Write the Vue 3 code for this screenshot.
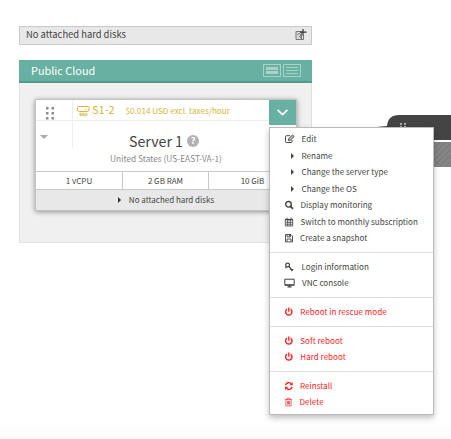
<script setup>
const groups = [
  [
    { icon: 'edit', label: 'Edit', x: 32.5 },
    { icon: 'caret', label: 'Rename', x: 32.5 },
    { icon: 'caret', label: 'Change the server type', x: 32.5 },
    { icon: 'caret', label: 'Change the OS', x: 32.5 },
    { icon: 'search', label: 'Display monitoring', x: 31.5 },
    { icon: 'calendar', label: 'Switch to monthly subscription', x: 31.5 },
    { icon: 'save', label: 'Create a snapshot', x: 31 },
  ],
  [
    { icon: 'key', label: 'Login information', x: 32.5 },
    { icon: 'screen', label: 'VNC console', x: 33 },
  ],
  [{ icon: 'power', label: 'Reboot in rescue mode', x: 31.3, danger: true }],
  [
    { icon: 'power', label: 'Soft reboot', x: 31.3, danger: true },
    { icon: 'power', label: 'Hard reboot', x: 31.3, danger: true },
  ],
  [
    { icon: 'refresh', label: 'Reinstall', x: 31, danger: true },
    { icon: 'trash', label: 'Delete', x: 30.5, danger: true },
  ],
]
const specs = ['1 vCPU', '2 GB RAM', '10 GiB']
</script>

<template>
  <div class="page">
    <svg class="neighbour" width="80" height="55" viewBox="0 0 80 55">
      <defs>
        <pattern id="hatch" width="6" height="6" patternUnits="userSpaceOnUse">
          <rect width="6" height="6" fill="#858585" />
          <path d="M-1 7L7 -1M-1 1L1 -1M5 7L7 5" stroke="#737373" stroke-width=".8" />
        </pattern>
      </defs>
      <path d="M0 12.500L16 11Q17 0 28 0H80V25H0Z" fill="#444" />
      <rect x="0" y="27" width="80" height="25" fill="url(#hatch)" />
      <path d="M29 8h2v2h-2zM33 8h2v2h-2zM29 11h2v2h-2zM33 11h2v2h-2z" fill="#aaa" />
    </svg>

    <div class="disks">
      <span>No attached hard disks</span>
      <svg width="12" height="12" viewBox="0 0 12 12" fill="none">
        <path d="M1 2.500h5.500v8H1z" fill="#d8d8d8" stroke="#777" />
        <path d="M8.500 6v4.500H3" stroke="#777" />
        <path d="M2.500 5.500q2-2 3 0t-1 2l3 2.500" stroke="#666" stroke-width=".9" />
        <path d="M8 0v6.500M5 3.200h6.500" stroke="#333" stroke-width="1.200" />
      </svg>
    </div>

    <section class="cloud">
      <header>
        <h1>Public Cloud</h1>
        <svg width="39" height="13" viewBox="0 0 39 13" fill="none" stroke="#a9d3c8">
          <path d="M.5 .5h17v12H.5zM20.500 .5h17v12h-17z" />
          <path d="M3 4.500h12M3 8.500h12" stroke-width="3" />
          <path d="M3 6.500h12" stroke="#67b0a2" />
          <path d="M23 3.500h12M23 6.500h12M23 9.500h12" />
        </svg>
      </header>
      <div class="body">
        <article class="card">
          <div class="top">
            <div class="grip">
              <svg width="9" height="13" viewBox="0 0 9 13" fill="#8d8d8d">
                <path d="M0 0h2.500v2.500H0zM5.500 0H8v2.500H5.500zM0 5h2.500v2.500H0zM5.500 5H8v2.500H5.500zM0 10h2.500v2.500H0zM5.500 10H8v2.500H5.500z" />
              </svg>
            </div>
            <svg class="ssd" width="13" height="11" viewBox="0 0 13 11" fill="none" stroke="#d5b63c">
              <path d="M1.500 .5h9.500q1 0 1 1v2.200q0 1.800-1.800 1.800H2.300Q.5 5.500 .5 3.700V1.500q0-1 1-1Z" />
              <path d="M8 3.500h2" stroke-width=".7" />
              <path d="M4.600 7.200H2.800v1.200h1.800v1.300H2.600M7.400 7.200H5.600v1.200h1.800v1.300H5.400M8.700 7.200v2.500h.8l.7-.7V7.800l-.7-.6Z" stroke-width=".8" />
            </svg>
            <span class="model">S1-2</span>
            <span class="price">$0.014 USD excl. taxes/hour</span>
            <button class="toggle">
              <svg width="11" height="7" viewBox="0 0 11 7" fill="none" stroke="#fff" stroke-width="1.700">
                <path d="M.6 .8L5.500 5.600L10.400 .8" />
              </svg>
            </button>
          </div>
          <div class="main">
            <div class="fold"><i></i></div>
            <div class="name">
              <span>Server 1</span>
              <b>?</b>
            </div>
            <p>United States (US-EAST-VA-1)</p>
          </div>
          <div class="specs">
            <div v-for="s in specs" :key="s">{{ s }}</div>
          </div>
          <div class="attached"><i></i><span>No attached hard disks</span></div>
        </article>
      </div>
    </section>

    <nav class="menu">
      <ul v-for="(g, n) in groups" :key="n">
        <li v-for="it in g" :key="it.label" :class="{ danger: it.danger }">
          <svg class="icon" width="12" height="10" viewBox="0 0 12 10" fill="none" stroke="currentColor">
            <template v-if="it.icon === 'edit'">
              <path d="M6 1.700H2.500Q1.500 1.700 1.500 2.700V7.500Q1.500 8.500 2.500 8.500H7Q8 8.500 8 7.500V6" />
              <path d="M4.400 6.500L4.800 4.600L8.500 .9L10.200 2.500L6.400 6.200Z" fill="#bbb" stroke-width=".9" />
            </template>
            <path v-else-if="it.icon === 'caret'" d="M7 2L10 5L7 8Z" fill="currentColor" stroke="none" />
            <template v-else-if="it.icon === 'search'">
              <circle cx="4.500" cy="4.300" r="2.800" stroke-width="1.400" />
              <path d="M6.500 6.300L9 8.900" stroke-width="1.700" />
            </template>
            <template v-else-if="it.icon === 'calendar'">
              <path d="M1.300 2.500h7.400v6.500H1.300zM3 .5v2M7 .5v2M3.700 3v6M6.300 3v6M1.300 5.300h7.400M1.300 7.200h7.400" stroke-width=".8" />
              <path d="M1 2.600h8" stroke-width="1.500" />
            </template>
            <template v-else-if="it.icon === 'save'">
              <path d="M1.500 1.500H7L8.500 3V8.900H1.500ZM3 8.800V6H7V8.800M3 1.500V3.900H6.500V1.500" stroke-width=".9" />
              <path d="M4.900 1.700h1v1.700h-1z" fill="currentColor" stroke="none" />
            </template>
            <template v-else-if="it.icon === 'key'">
              <circle cx="3.600" cy="3" r="1.900" stroke-width="1.200" />
              <path d="M1.500 6.300L2.500 4.500M4.800 4.300L8.500 8.500M6.300 7.700L7.500 6.500M7.500 9L9.200 7.300" stroke-width="1.200" />
            </template>
            <template v-else-if="it.icon === 'screen'">
              <path d="M.8 1.200h9.400v6H.8z" stroke-width="1" />
              <path d="M1 6.800h9M3.500 8.900h4M5.500 7v2" stroke-width="1.200" />
            </template>
            <path v-else-if="it.icon === 'power'" d="M3 2.200A3.200 3.200 0 1 0 6.600 2.200M4.800 .6V4.800" stroke-width="1.400" />
            <template v-else-if="it.icon === 'refresh'">
              <path d="M1.600 4.200A3.200 3.200 0 0 1 7.100 2.700M8.100 5.800A3.200 3.200 0 0 1 2.500 7.300" stroke-width="1.400" />
              <path d="M8.700 1V4.300H5.400ZM1 9V5.700H4.300Z" fill="currentColor" stroke="none" />
            </template>
            <path v-else d="M1 2.500h7M3 2.300l.4-1.300h2.200l.4 1.300M1.900 2.700V8.900H7.100V2.700M3.500 4v3.600M4.500 4v3.600M5.500 4v3.600" stroke-width=".7" />
          </svg>
          <span :style="{ marginLeft: it.x - 27 + 'px' }">{{ it.label }}</span>
        </li>
      </ul>
    </nav>
  </div>
</template>

<style>
body { background: #fff; }
</style>

<style scoped>
* { box-sizing: border-box; }
.page {
  position: relative;
  width: 451px;
  height: 439px;
  padding: 26px 0 0 19px;
  overflow: hidden;
  font-family: "Noto Sans CJK SC", "Open Sans", sans-serif;
  font-size: 8px;
  color: #444;
  background: linear-gradient(#fff 420px, #fbfbfb);
}
.neighbour { position: absolute; left: 371px; top: 115px; }
.disks {
  display: flex;
  align-items: center;
  justify-content: space-between;
  width: 293px;
  height: 19px;
  padding: 0 4px 2px 6px;
  border: 1px solid #c8c8c8;
  background: #e8e8e8;
  font-size: 9.400px;
  line-height: 14px;
}
.disks span { padding-bottom: 2px; }
.cloud { width: 293px; margin-top: 15px; }
.cloud header {
  display: flex;
  align-items: center;
  justify-content: space-between;
  height: 23px;
  padding: 0 10px 0 12px;
  border-bottom: 2px solid #529a8a;
  background: #67b0a2;
}
h1 { margin: 0; padding-bottom: 2px; font-size: 10.900px; font-weight: 400; line-height: 18px; color: #fff; }
.body {
  height: 160px;
  padding: 17px 15px 0 16px;
  border: 1px solid #e0e0e0;
  border-top: 0;
  background: #f0f0f0;
}
.card {
  width: 260px;
  height: 110px;
  background: #fff;
  box-shadow: 0 0 0 1px #c2c2c2, 0 1px 5px 1px rgba(0, 0, 0, .4);
}
.top {
  display: flex;
  align-items: center;
  height: 21px;
  border-bottom: 1px solid #eee;
}
.grip {
  display: flex;
  width: 37px;
  height: 20px;
  padding: 7px 0 0 10px;
  border-right: 1px solid #eee;
}
.ssd { margin-left: 4px; margin-top: 3px; }
.model { margin-left: 2px; margin-top: -2px; font-size: 11px; line-height: 20px; color: #d5b63c; }
.price { margin-left: 11px; margin-top: 2px; font-size: 8.150px; line-height: 18px; color: #d5b63c; white-space: nowrap; }
.toggle {
  display: flex;
  align-self: flex-start;
  align-items: center;
  justify-content: center;
  flex: none;
  width: 27px;
  height: 25px;
  margin-left: auto;
  padding: 0 0 1px;
  border: 0;
  background: #67b0a2;
}
.main { position: relative; height: 50px; text-align: center; }
.fold { position: absolute; left: 0; top: 0; width: 37px; height: 27px; border-right: 1px solid #eee; }
.fold i {
  display: block;
  margin: 14px 0 0 4px;
  width: 0;
  border: 4px solid transparent;
  border-top-color: #aaa;
  border-bottom: 0;
}
.name {
  display: flex;
  align-items: center;
  justify-content: center;
  gap: 4px;
  height: 30px;
  padding: 10px 4px 0 0;
  font-size: 14.200px;
  line-height: 20px;
}
.name span { margin-top: -1px; }
.name b {
  width: 12px;
  height: 12px;
  border-radius: 50%;
  background: #b2b2b2;
  color: #fff;
  font-size: 9px;
  line-height: 12px;
}
p { margin: 0; font-size: 8.300px; line-height: 14px; color: #888; }
.specs {
  display: grid;
  grid-template-columns: 86px 86px 88px;
  height: 19px;
  border: solid #c8c8c8;
  border-width: 1px 0;
  line-height: 17px;
  text-align: center;
}
.specs div + div { border-left: 1px solid #c8c8c8; }
.attached {
  display: flex;
  align-items: center;
  justify-content: center;
  gap: 8px;
  height: 20px;
  background: #e8e8e8;
  line-height: 18px;
}
.attached i { border: 3px solid transparent; border-left-color: #333; border-right: 0; }
.menu {
  position: absolute;
  left: 269px;
  top: 127px;
  width: 165px;
  height: 288px;
  padding-top: 3px;
  border: 1px solid #bbb;
  background: #fff;
  font-size: 8.080px;
  box-shadow: 0 3px 6px rgba(0, 0, 0, .25);
}
ul { margin: 0; padding: 0; list-style: none; }
ul + ul { margin-top: 5.600px; padding-top: 5.500px; border-top: 1px solid #ddd; }
li { display: flex; align-items: center; height: 16.520px; line-height: 14px; padding-left: 14px; white-space: nowrap; }
.icon { flex: none; overflow: visible; }
.danger { color: #f22; }
</style>
